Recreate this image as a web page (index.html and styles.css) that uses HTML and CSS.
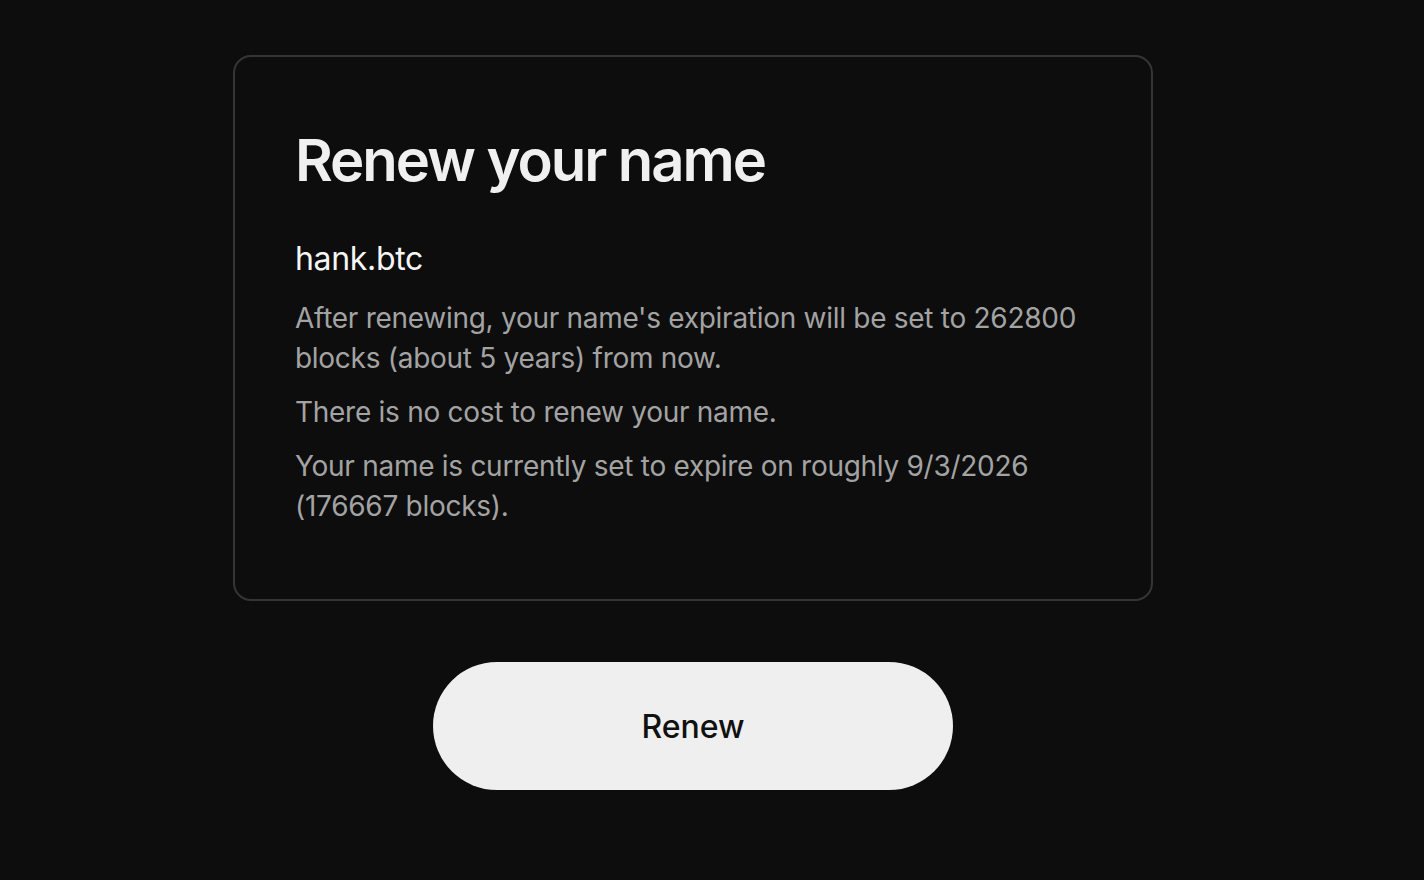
FILE: index.html
```html
<!DOCTYPE html>
<html lang="en">
<head>
<meta charset="utf-8">
<title>Renew your name</title>
<link rel="stylesheet" href="styles.css">
</head>
<body>
<main class="page">
  <section class="card">
    <h1 class="title">Renew your name</h1>
    <div class="name">hank.btc</div>
    <p class="text">After renewing, your name's expiration will be set to 262800 blocks (about 5 years) from now.</p>
    <p class="text">There is no cost to renew your name.</p>
    <p class="text">Your name is currently set to expire on roughly 9/3/2026 (176667 blocks).</p>
  </section>
  <button class="renew">Renew</button>
</main>
</body>
</html>
```

FILE: styles.css
```css
html, body {
  margin: 0;
  padding: 0;
  background: #0d0d0d;
  height: 100%;
}
body {
  font-family: Inter, "Noto Sans", sans-serif;
  color: #efefef;
}
.page {
  display: flex;
  flex-direction: column;
  align-items: center;
  padding: 55px 38px 0 0;
  gap: 61px;
}
.card {
  box-sizing: border-box;
  width: 920px;
  height: 546px;
  border: 2px solid #353535;
  border-radius: 18px;
  padding: 68px 62px 0 60px;
}
.title {
  margin: 0;
  font-size: 58px;
  line-height: 70px;
  font-weight: 600;
  letter-spacing: -0.035em;
  color: #f0f0f0;
}
.name {
  margin-top: 44px;
  font-size: 32px;
  line-height: 40px;
  font-weight: 400;
  letter-spacing: -0.01em;
  color: #f5f5f5;
}
.text {
  margin: 14px 0 0 0;
  font-size: 28px;
  line-height: 40px;
  letter-spacing: -0.01em;
  color: #a3a3a3;
}
.name + .text {
  margin-top: 19px;
}
.renew {
  width: 520px;
  height: 128px;
  border: none;
  border-radius: 64px;
  background: #efefef;
  color: #111;
  font-family: Inter, "Noto Sans", sans-serif;
  font-size: 32px;
  font-weight: 500;
  cursor: pointer;
}
```
